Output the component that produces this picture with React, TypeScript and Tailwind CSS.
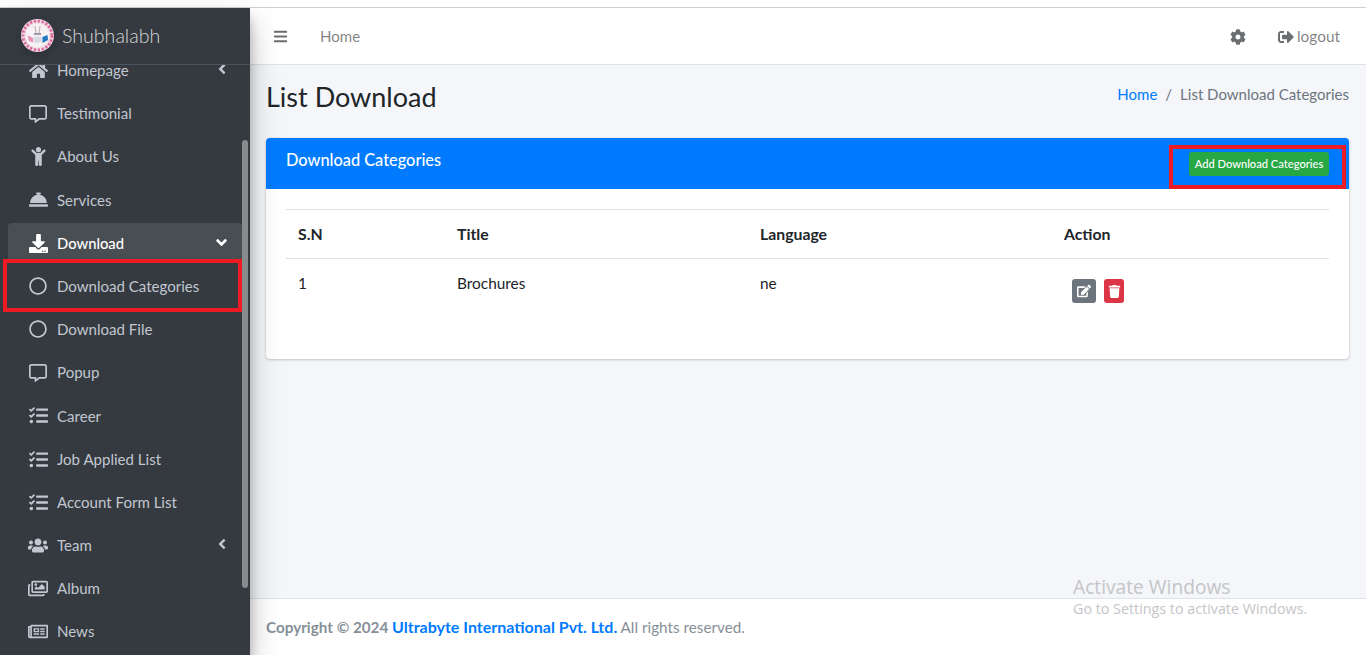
import React from "react";
import {
  FaAngleDown,
  FaAngleLeft,
  FaBars,
  FaChild,
  FaCog,
  FaConciergeBell,
  FaDownload,
  FaEdit,
  FaHome,
  FaRegCircle,
  FaRegCommentAlt,
  FaRegImages,
  FaRegNewspaper,
  FaSignOutAlt,
  FaTasks,
  FaTrash,
  FaUsers,
} from "react-icons/fa";

interface NavItem {
  label: string;
  icon: React.ComponentType<{ className?: string }>;
  iconSize: string;
  arrow?: boolean;
  active?: boolean;
}

const navItems: NavItem[] = [
  { label: "Homepage", icon: FaHome, iconSize: "text-[19px]", arrow: true },
  { label: "Testimonial", icon: FaRegCommentAlt, iconSize: "text-[18px]" },
  { label: "About Us", icon: FaChild, iconSize: "text-[19px]" },
  { label: "Services", icon: FaConciergeBell, iconSize: "text-[19px]" },
  { label: "Download", icon: FaDownload, iconSize: "text-[19px]", active: true },
  { label: "Download Categories", icon: FaRegCircle, iconSize: "text-[18px]" },
  { label: "Download File", icon: FaRegCircle, iconSize: "text-[18px]" },
  { label: "Popup", icon: FaRegCommentAlt, iconSize: "text-[18px]" },
  { label: "Career", icon: FaTasks, iconSize: "text-[19px]" },
  { label: "Job Applied List", icon: FaTasks, iconSize: "text-[19px]" },
  { label: "Account Form List", icon: FaTasks, iconSize: "text-[19px]" },
  { label: "Team", icon: FaUsers, iconSize: "text-[23px]", arrow: true },
  { label: "Album", icon: FaRegImages, iconSize: "text-[21px]" },
  { label: "News", icon: FaRegNewspaper, iconSize: "text-[21px]" },
];

const Logo = () => (
  <svg width="33" height="33" viewBox="0 0 33 33" className="shrink-0 drop-shadow-lg">
    <circle cx="16.5" cy="16.5" r="16.5" fill="#efe3e8" />
    <circle cx="16.5" cy="16.5" r="14.5" fill="none" stroke="#e0719f" strokeWidth="3" strokeDasharray="2.5 1.5" />
    <circle cx="16.5" cy="16.5" r="11.5" fill="#f6f1f3" />
    <path d="M6.5 16.5l6 2.5-.5 4.5-4-1.500z" fill="#e890b6" />
    <path d="M21.500 18l5-2 .5 5-5.500 3z" fill="#2278c0" />
    <path d="M11.500 19.500c3-2.500 7-2.500 9.500-1l-1 5-6.500.5z" fill="#d8dbe4" />
    <path d="M14 7l1 7M19 7l-1 7" stroke="#c9b3c0" strokeWidth="1.300" />
    <path d="M13 15h7" stroke="#6a6478" strokeWidth="1.200" />
  </svg>
);

const SidebarRow = ({ item }: { item: NavItem }) => {
  const Icon = item.icon;
  return (
    <li
      className={
        item.active
          ? "flex h-[40px] mb-[3.2px] items-center rounded bg-[#494e53] pl-[20px] pr-[12px] text-[14.8px] text-white font-medium"
          : "flex h-[40px] mb-[3.2px] items-center pl-[20px] pr-[12px] text-[#c2c7d0]"
      }
    >
      <span className="mr-[9px] flex w-[20px] shrink-0 justify-center">
        <Icon className={item.iconSize} />
      </span>
      <span className="flex-1 whitespace-nowrap">{item.label}</span>
      {item.arrow && <FaAngleLeft className="-mt-[3px] text-[16px]" />}
      {item.active && <FaAngleDown className="-mt-[2px] text-[17px]" />}
    </li>
  );
};

const App = () => {
  return (
    <div className="flex h-[655px] w-[1366px] flex-col overflow-hidden bg-white font-['Lato','Noto_Sans',sans-serif] text-[15.05px] text-[#212529]">
      <div className="h-[8px] shrink-0 border-b border-[#d0d0d0] bg-white" />
      <div className="flex min-h-0 flex-1">
        <aside className="relative z-10 flex w-[250px] shrink-0 flex-col bg-[#343a40] shadow-[0_14px_28px_rgba(0,0,0,0.25),0_10px_10px_rgba(0,0,0,0.22)]">
          <div className="flex h-[57px] shrink-0 items-center gap-[8px] border-b border-[#4b545c] pb-[2px] pl-[21px]">
            <Logo />
            <span className="mt-[2px] text-[19.6px] font-light text-[rgba(255,255,255,0.8)]">Shubhalabh</span>
          </div>
          <div className="relative min-h-0 flex-1 overflow-hidden">
            <ul className="-mt-[14.7px] pl-[8px] pr-[8px]">
              {navItems.map((item) => (
                <SidebarRow key={item.label} item={item} />
              ))}
            </ul>
            <div className="absolute left-[242px] top-[75px] h-[448px] w-[6px] rounded bg-[#868b8d]" />
            <div className="absolute left-[3px] top-[194px] h-[53px] w-[239px] border-[4px] border-[#ed1c24]" />
          </div>
        </aside>

        <div className="flex min-w-0 flex-1 flex-col">
          <header className="flex h-[57px] shrink-0 items-center border-b border-[#dee2e6] bg-white pl-[24px] pr-[26px] pt-[1px]">
            <FaBars className="-ml-[1px] text-[15px] text-[#6b6e70]" />
            <span className="ml-[32px] text-[rgba(0,0,0,0.5)]">Home</span>
            <FaCog className="ml-auto text-[16px] text-[#6b6e70]" />
            <span className="ml-[32px] mt-[1px] flex items-center gap-[3px] text-[15.4px] text-[rgba(0,0,0,0.5)]">
              <FaSignOutAlt className="text-[16px] text-[#6b6e70]" />
              logout
            </span>
          </header>

          <main className="relative flex min-h-0 flex-1 flex-col bg-[#f4f6f9] pl-[16px] pr-[17px]">
            <div className="mb-[8px] flex h-[65px] shrink-0 items-center justify-between">
              <h1 className="text-[27px] font-normal text-[#212529]">List Download</h1>
              <div className="-mt-[7px] text-[15px] text-[#6c757d]">
                <span className="text-[#007bff]">Home</span>
                <span className="mx-[8px]">/</span>
                List Download Categories
              </div>
            </div>

            <section className="h-[221px] rounded bg-white shadow-[0_0_1px_rgba(0,0,0,0.13),0_1px_3px_rgba(0,0,0,0.2)]">
              <div className="relative flex h-[51px] items-start justify-between rounded-t bg-[#007bff] pl-[20px] pr-[20px] text-white">
                <span className="mt-[10px] text-[16.35px] font-medium">Download Categories</span>
                <button className="mt-[14px] flex h-[24px] w-[140px] items-center justify-center rounded-[3px] bg-[#28a745] text-[11.15px] font-medium text-white">
                  Add Download Categories
                </button>
                <div className="absolute left-[903px] top-[7px] h-[44px] w-[177px] border-[4.5px] border-[#ed1c24]" />
              </div>
              <div className="px-[20px] pt-[20px]">
                <table className="w-full table-fixed border-t border-[#dee2e6] text-left text-[15.4px]">
                  <thead>
                    <tr className="h-[49px] border-b border-[#dee2e6] text-[15.8px] font-bold">
                      <th className="w-[159px] pl-[12px]">S.N</th>
                      <th className="w-[303px] pl-[12px]">Title</th>
                      <th className="w-[304px] pl-[12px]">Language</th>
                      <th className="pl-[12px]">Action</th>
                    </tr>
                  </thead>
                  <tbody>
                    <tr>
                      <td className="pl-[12px] pt-[13px] align-top">1</td>
                      <td className="pl-[12px] pt-[13px] align-top">Brochures</td>
                      <td className="pl-[12px] pt-[13px] align-top">ne</td>
                      <td className="pl-[20px] pt-[20px] align-top">
                        <div className="flex gap-[8px]">
                          <span className="flex h-[24px] w-[24px] items-center justify-center rounded-[3px] bg-[#6c757d] text-white">
                            <FaEdit className="text-[14px]" />
                          </span>
                          <span className="flex h-[24px] w-[20px] items-center justify-center rounded-[3px] bg-[#dc3545] text-white">
                            <FaTrash className="text-[13px]" />
                          </span>
                        </div>
                      </td>
                    </tr>
                  </tbody>
                </table>
              </div>
            </section>

            <div className="absolute left-[823px] top-[510px] font-['Open_Sans',sans-serif] text-[#c4c5c8]">
              <p className="text-[19.2px] leading-[24px]">Activate Windows</p>
              <p className="text-[14.3px] leading-[20px]">Go to Settings to activate Windows.</p>
            </div>
          </main>

          <footer className="flex h-[57px] shrink-0 items-center border-t border-[#dee2e6] bg-white pl-[16px] text-[15.25px] text-[#869099]">
            <strong className="font-bold">Copyright © 2024&nbsp;</strong>
            <strong className="text-[16px] font-bold text-[#007bff]">Ultrabyte International Pvt. Ltd.</strong>
            <span>&nbsp;All rights reserved.</span>
          </footer>
        </div>
      </div>
    </div>
  );
};

export default App;
